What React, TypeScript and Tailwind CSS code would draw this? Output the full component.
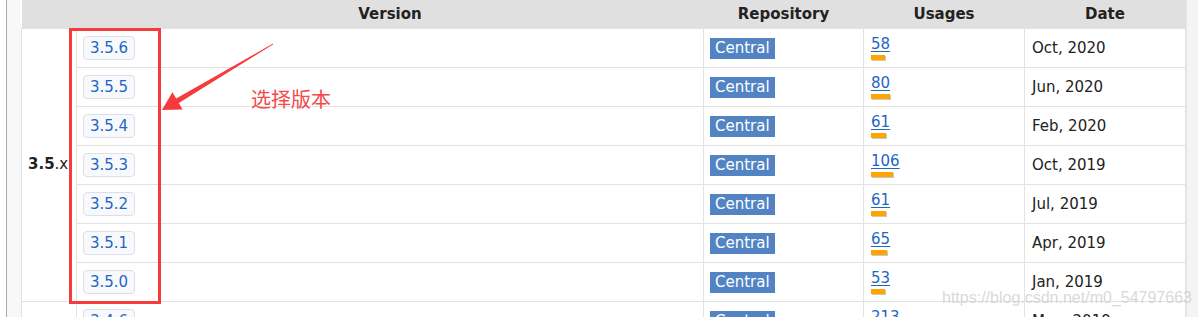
import React from "react";

const rows = [
  { v: "3.5.6", u: "58", w: 14, d: "Oct, 2020" },
  { v: "3.5.5", u: "80", w: 19, d: "Jun, 2020" },
  { v: "3.5.4", u: "61", w: 15, d: "Feb, 2020" },
  { v: "3.5.3", u: "106", w: 22, d: "Oct, 2019" },
  { v: "3.5.2", u: "61", w: 15, d: "Jul, 2019" },
  { v: "3.5.1", u: "65", w: 16, d: "Apr, 2019" },
  { v: "3.5.0", u: "53", w: 14, d: "Jan, 2019" },
];

function VersionBtn({ v }: { v: string }) {
  return (
    <span className="inline-block rounded-[4px] border border-[#dcdfe8] bg-[#f8f9fc] px-[6px] leading-[22px] text-[15px] text-[#1f66c2]">
      {v}
    </span>
  );
}

function Central() {
  return (
    <span className="inline-block bg-[#5284c4] px-[5px] leading-[21px] text-[15px] text-white">Central</span>
  );
}

function Usage({ u, w }: { u: string; w: number }) {
  return (
    <div className="flex flex-col items-start">
      <span className="text-[15px] leading-[17px] text-[#1f66c2] underline decoration-[#1f66c2] underline-offset-[2px]">{u}</span>
      <span className="mt-[2px] h-[5px] bg-[#ffa500] shadow-[1px_1px_0_#c8c8c8]" style={{ width: w }} />
    </div>
  );
}

export default function App() {
  return (
    <div
      className="relative flex h-[317px] w-[1198px] overflow-hidden bg-white text-[#222]"
      style={{ fontFamily: '"DejaVu Sans", Verdana, sans-serif' }}
    >
      <div className="w-[6px] bg-white" />
      <div className="w-px bg-[#a8a8a8]" />
      <div className="w-[14px] bg-[#f8f8f8]" />
      <table className="w-[1164px] table-fixed border-collapse self-start">
        <colgroup>
          <col className="w-[55px]" />
          <col className="w-[627px]" />
          <col className="w-[160px]" />
          <col className="w-[161px]" />
          <col className="w-[161px]" />
        </colgroup>
        <thead>
          <tr className="h-[28px] bg-[#e0e0e0] text-[15px] font-bold">
            <th />
            <th className="text-center">Version</th>
            <th className="text-center">Repository</th>
            <th className="text-center">Usages</th>
            <th className="text-center">Date</th>
          </tr>
        </thead>
        <tbody>
          {rows.map((r, i) => (
            <tr key={r.v} className="h-[39px]">
              {i === 0 && (
                <td rowSpan={7} className="border border-[#e2e2e2] pl-[6px] align-middle text-[15px]">
                  <b>3.5</b>.x
                </td>
              )}
              <td className="border border-[#e2e2e2] pl-[6px] align-middle">
                <VersionBtn v={r.v} />
              </td>
              <td className="border border-[#e2e2e2] pl-[6px] align-middle">
                <Central />
              </td>
              <td className="border border-[#e2e2e2] pl-[7px] align-middle">
                <Usage u={r.u} w={r.w} />
              </td>
              <td className="border border-[#e2e2e2] pl-[7px] pt-[2px] align-middle text-[15px]">{r.d}</td>
            </tr>
          ))}
          <tr className="h-[39px]">
            <td className="border border-[#e2e2e2]" />
            <td className="border border-[#e2e2e2] pl-[6px] align-middle">
              <VersionBtn v="3.4.6" />
            </td>
            <td className="border border-[#e2e2e2] pl-[6px] align-middle">
              <Central />
            </td>
            <td className="border border-[#e2e2e2] pl-[7px] align-middle">
              <Usage u="213" w={28} />
            </td>
            <td className="border border-[#e2e2e2] pl-[7px] pt-[2px] align-middle text-[15px]">May, 2019</td>
          </tr>
        </tbody>
      </table>
      <div className="flex-1 border-l border-[#e6e6e6] bg-[#f4f4f4]" />

      {/* annotation overlay */}
      <div className="absolute left-[69px] top-[28px] h-[276px] w-[92px] border-[3px] border-[#f53b3b]" />
      <svg className="absolute left-0 top-0" width="1198" height="317" viewBox="0 0 1198 317">
        <polygon
          points="273,43.6 176.2,98.6 172.4,92.2 162,110 182.6,109.4 178.8,103 273,44.4"
          fill="#f53b3b"
        />
      </svg>
      <div
        className="absolute left-[251px] top-[87px] text-[20px] leading-[24px] text-[#f54848]"
        style={{ fontFamily: '"Noto Sans CJK SC", sans-serif' }}
      >
        选择版本
      </div>
      <div
        className="absolute left-[942px] top-[288px] text-[16px] leading-[20px] text-[rgba(200,200,200,0.7)]"
        style={{ fontFamily: '"Liberation Sans", Arial, sans-serif' }}
      >
        https://blog.csdn.net/m0_54797663
      </div>
    </div>
  );
}
